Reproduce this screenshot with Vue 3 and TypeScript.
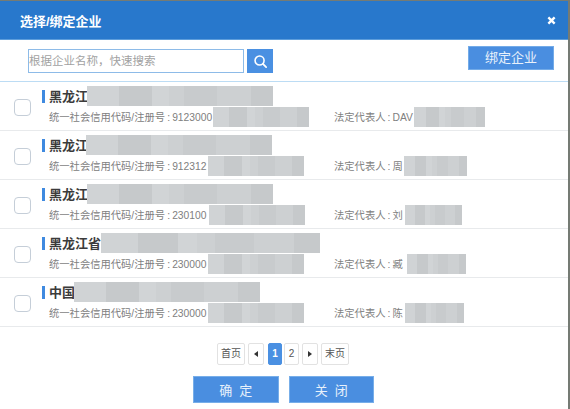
<script setup lang="ts">
interface Company {
  name: string
  nameW: number
  nameGap: number
  code: string
  codeW: number
  codeGap: number
  legal: string
  legalW: number
  legalGap: number
}

const companies: Company[] = [
  { name: '黑龙江', nameW: 186, nameGap: -1, code: '9123000', codeW: 96, codeGap: 1, legal: 'DAV', legalW: 71, legalGap: 1 },
  { name: '黑龙江', nameW: 186, nameGap: -2, code: '912312', codeW: 96, codeGap: 1, legal: '周', legalW: 63, legalGap: 1 },
  { name: '黑龙江', nameW: 186, nameGap: -1, code: '230100', codeW: 96, codeGap: 2, legal: '刘', legalW: 57, legalGap: 2 },
  { name: '黑龙江省', nameW: 219, nameGap: 0, code: '230000', codeW: 96, codeGap: 1, legal: '臧', legalW: 59, legalGap: 4 },
  { name: '中国', nameW: 186, nameGap: -1, code: '230000', codeW: 96, codeGap: 1, legal: '陈', legalW: 59, legalGap: 2 }
]
</script>

<template>
  <div class="dialog">
    <header class="head">
      <span class="head-title">选择/绑定企业</span>
      <svg class="close" viewBox="0 0 10 10" width="9" height="9">
        <path d="M1.5 1.5 8.5 8.5M8.5 1.5 1.5 8.5" stroke="#fff" stroke-width="2.6" fill="none" />
      </svg>
    </header>

    <div class="toolbar">
      <div class="search">
        <div class="search-input">根据企业名称，快速搜索</div>
        <button class="search-btn" type="button">
          <svg viewBox="0 0 16 16" width="15" height="15">
            <circle cx="7" cy="7" r="4.8" stroke="#fff" stroke-width="1.7" fill="none" />
            <path d="M10.6 10.6 14 14" stroke="#fff" stroke-width="1.9" stroke-linecap="round" />
          </svg>
        </button>
      </div>
      <button class="bind" type="button">绑定企业</button>
    </div>

    <ul class="list">
      <li v-for="(c, i) in companies" :key="i" class="row">
        <span class="check"></span>
        <div class="info">
          <div class="title">
            <span class="mark"></span>
            <span class="name">{{ c.name }}</span>
            <span class="mosaic" :style="{ width: c.nameW + 'px', marginLeft: c.nameGap + 'px' }"></span>
          </div>
          <div class="meta">
            <div class="meta-code">
              <span class="meta-text">统一社会信用代码/注册号<span class="colon">:</span>{{ c.code }}</span>
              <span class="mosaic" :style="{ width: c.codeW + 'px', marginLeft: c.codeGap + 'px' }"></span>
            </div>
            <div class="meta-legal">
              <span class="meta-text">法定代表人<span class="colon">:</span>{{ c.legal }}</span>
              <span class="mosaic" :style="{ width: c.legalW + 'px', marginLeft: c.legalGap + 'px' }"></span>
            </div>
          </div>
        </div>
      </li>
    </ul>

    <nav class="pager">
      <span class="page wide">首页</span>
      <span class="page arrow"><i class="tri left"></i></span>
      <span class="page current">1</span>
      <span class="page num">2</span>
      <span class="page arrow"><i class="tri right"></i></span>
      <span class="page wide">末页</span>
    </nav>

    <div class="actions">
      <button class="action" type="button">确&nbsp;&nbsp;定</button>
      <button class="action" type="button">关&nbsp;&nbsp;闭</button>
    </div>
  </div>
</template>

<style>
html, body {
  margin: 0;
  background: #757b74;
  overflow: hidden;
}
</style>

<style scoped>
.dialog {
  box-sizing: border-box;
  width: 568px;
  height: 408px;
  margin-top: 1px;
  background: #fff;
  font-family: "Liberation Sans", "Noto Sans CJK SC", sans-serif;
  overflow: hidden;
}
.head {
  height: 38px;
  background: #2878cc;
  border-bottom: 1px solid #5d9ddb;
  box-sizing: content-box;
  display: flex;
  align-items: center;
  justify-content: space-between;
  padding: 0 12px 0 20px;
  color: #fff;
}
.head-title {
  font-size: 13px;
  font-weight: 700;
}
.toolbar {
  height: 41px;
  border-bottom: 1px solid #bcdcf4;
  display: flex;
  justify-content: space-between;
  padding: 0 14px 0 28px;
  box-sizing: content-box;
}
.search {
  display: flex;
  gap: 3px;
  margin-top: 9px;
  height: 24px;
}
.search-input {
  box-sizing: border-box;
  width: 216px;
  height: 24px;
  border: 1px solid #8dbbe8;
  font-size: 11.5px;
  line-height: 22px;
  color: #a2a2a2;
  white-space: nowrap;
}
.search-btn {
  width: 26px;
  height: 24px;
  padding: 0;
  border: 0;
  background: #4a90e2;
  display: flex;
  align-items: center;
  justify-content: center;
}
.bind {
  margin-top: 6px;
  width: 86px;
  height: 24px;
  padding: 0;
  border: 1px solid #73abe8;
  background: #4a8ee0;
  color: #e8f1fb;
  font-family: inherit;
  font-size: 13px;
  line-height: 22px;
}
.list {
  list-style: none;
  margin: 0;
  padding: 0;
}
.row {
  box-sizing: border-box;
  height: 49px;
  border-bottom: 1px solid #e8eaec;
  display: flex;
  align-items: center;
  padding-left: 14px;
}
.check {
  box-sizing: border-box;
  flex: none;
  width: 17px;
  height: 17px;
  margin-top: 3px;
  border: 1px solid #c5ced8;
  border-radius: 4px;
  background: #fff;
}
.info {
  margin-left: 11px;
  flex: 1;
  min-width: 0;
}
.title {
  display: flex;
  align-items: center;
  height: 22px;
  font-size: 13px;
  font-weight: 700;
  color: #3b3b3b;
}
.mark {
  width: 3px;
  height: 13px;
  background: #3f8ae0;
  margin-right: 4px;
}
.name {
  white-space: nowrap;
  margin-bottom: 2px;
}
.meta {
  display: flex;
  height: 20px;
  font-size: 10.3px;
  color: #808080;
  margin-left: 7px;
  white-space: nowrap;
}
.meta-text {
  margin-bottom: 2px;
}
.colon {
  display: inline-block;
  width: 7px;
  text-align: center;
}
.meta-code,
.meta-legal {
  display: flex;
  align-items: center;
}
.meta-code {
  width: 285px;
  flex: none;
}
.mosaic {
  display: block;
  flex: none;
  height: 20px;
  background:
    linear-gradient(90deg,
      #d0d3d5 0 17%, #c6c9cb 17% 35%, #d1d4d6 35% 44%, #cdd0d2 44% 52%, #c8cbcd 52% 70%, #cdd0d2 70% 88%, #c6c9cb 88% 100%);
}
.pager {
  display: flex;
  justify-content: flex-start;
  gap: 3px;
  padding: 16px 0 0 217px;
}
.page {
  box-sizing: border-box;
  width: 16px;
  height: 22px;
  border: 1px solid #e2e2e2;
  border-radius: 2px;
  font-size: 10px;
  line-height: 20px;
  color: #555;
  text-align: center;
  display: flex;
  align-items: center;
  justify-content: center;
}
.page.wide {
  width: 28px;
}
.page.num {
  width: 15px;
}
.page.current {
  width: 14px;
  margin: 0 -1px 0 1px;
  background: #4a90e2;
  border-color: #4a90e2;
  color: #fff;
  font-weight: 700;
}
.tri {
  width: 0;
  height: 0;
  border-top: 3.5px solid transparent;
  border-bottom: 3.5px solid transparent;
}
.tri.left {
  border-right: 4px solid #333;
}
.tri.right {
  border-left: 4px solid #333;
}
.actions {
  display: flex;
  gap: 10px;
  padding: 11px 0 0 193px;
}
.action {
  box-sizing: border-box;
  width: 85.5px;
  height: 27px;
  padding: 0;
  border: 1px solid #77aee9;
  background: #4a8ee0;
  color: #e8f1fb;
  font-family: inherit;
  font-size: 13px;
}
</style>
